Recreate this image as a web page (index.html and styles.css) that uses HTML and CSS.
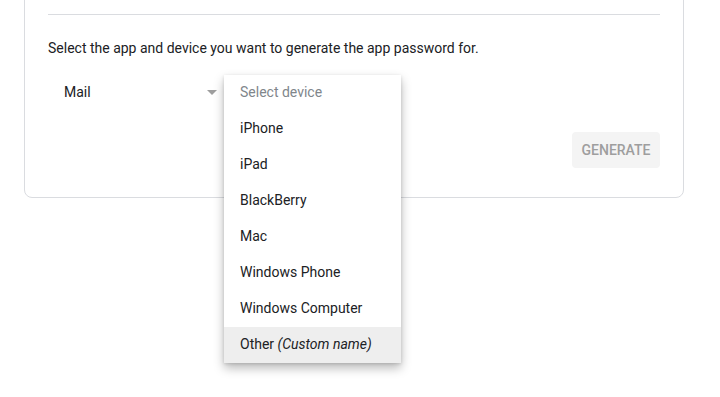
FILE: index.html
```html
<!DOCTYPE html>
<html lang="en">
<head>
    <meta charset="UTF-8">
    <meta name="viewport" content="width=device-width, initial-scale=1.0">
    <title>App passwords</title>
    <link rel="stylesheet" href="styles.css">
</head>
<body>
    <div class="page">
        <div class="card">
            <div class="card-head"></div>
            <div class="divider"></div>
            <p class="intro">Select the app and device you want to generate the app password for.</p>
            <div class="pickers">
                <div class="picker">
                    <span class="picker-value">Mail</span>
                    <span class="arrow"></span>
                </div>
                <div class="picker device">
                    <ul class="menu">
                        <li class="menu-item placeholder">Select device</li>
                        <li class="menu-item">iPhone</li>
                        <li class="menu-item">iPad</li>
                        <li class="menu-item">BlackBerry</li>
                        <li class="menu-item">Mac</li>
                        <li class="menu-item">Windows Phone</li>
                        <li class="menu-item">Windows Computer</li>
                        <li class="menu-item active">Other <em>(Custom name)</em></li>
                    </ul>
                </div>
            </div>
            <div class="actions">
                <button type="button" class="generate" disabled>Generate</button>
            </div>
        </div>
    </div>
</body>
</html>
```

FILE: styles.css
```css
html, body {
    height: 100%;
    margin: 0;
    padding: 0;
    background: #ffffff;
}
body {
    font-family: Roboto, 'Liberation Sans', sans-serif;
    font-size: 14px;
    color: #202124;
}
.page {
    min-height: 100%;
    padding: 0 24px;
}
.card {
    width: 660px;
    margin-top: -30px;
    border: 1px solid #dadce0;
    border-radius: 8px;
    padding: 0 23px 29px;
    box-sizing: border-box;
}
.card-head {
    height: 43px;
}
.divider {
    height: 1px;
    background: #dadce0;
}
.intro {
    margin: 23px 0 0;
    line-height: 20px;
}
.pickers {
    display: flex;
    margin-top: 16px;
}
.picker {
    position: relative;
    display: flex;
    align-items: center;
    width: 176px;
    height: 36px;
    padding: 0 7px 0 16px;
    box-sizing: border-box;
}
.picker-value {
    flex: 1;
}
.arrow {
    width: 0;
    height: 0;
    border-left: 5px solid transparent;
    border-right: 5px solid transparent;
    border-top: 5px solid #9e9e9e;
}
.menu {
    position: absolute;
    top: 1px;
    left: 0;
    width: 177px;
    margin: 0;
    padding: 0;
    list-style: none;
    background: #ffffff;
    box-shadow: 0 5px 10px rgba(0, 0, 0, 0.28), 0 1px 3px rgba(0, 0, 0, 0.12);
    z-index: 2;
}
.menu-item {
    height: 36px;
    line-height: 34px;
    padding: 0 16px;
    box-sizing: border-box;
    white-space: nowrap;
}
.menu-item.placeholder {
    color: #80868b;
}
.menu-item.active {
    background: #eeeeee;
}
.menu-item em {
    font-style: italic;
}
.actions {
    display: flex;
    justify-content: flex-end;
    margin-top: 22px;
}
.generate {
    width: 88px;
    height: 36px;
    padding: 0;
    border: none;
    border-radius: 4px;
    background: #f4f4f4;
    color: #9e9e9e;
    font-family: Roboto, 'Liberation Sans', sans-serif;
    font-size: 14px;
    font-weight: 500;
    text-transform: uppercase;
}
```
